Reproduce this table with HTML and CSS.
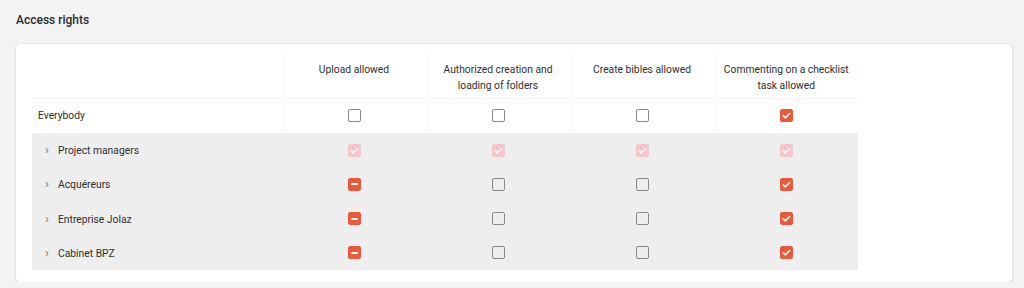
FILE: index.html
```html
<!DOCTYPE html>
<html>
<head>
<meta charset="utf-8">
<link rel="stylesheet" href="styles.css">
</head>
<body>
<h2 class="title">Access rights</h2>
<div class="card">
  <table class="rights">
    <colgroup>
      <col class="c-name"><col class="c-opt"><col class="c-opt"><col class="c-opt"><col class="c-opt">
    </colgroup>
    <thead>
      <tr>
        <th></th>
        <th>Upload allowed</th>
        <th>Authorized creation and loading of folders</th>
        <th>Create bibles allowed</th>
        <th>Commenting on a checklist task allowed</th>
      </tr>
    </thead>
    <tbody>
      <tr class="top">
        <td class="name">Everybody</td>
        <td><span class="cb"></span></td>
        <td><span class="cb"></span></td>
        <td><span class="cb"></span></td>
        <td><span class="cb on"><svg viewBox="0 0 13 13"><path d="M3.3 6.8 5.4 8.8 9.7 4.5"/></svg></span></td>
      </tr>
      <tr class="grp">
        <td class="name"><span class="chev">›</span>Project managers</td>
        <td><span class="cb dis"><svg viewBox="0 0 13 13"><path d="M3.3 6.8 5.4 8.8 9.7 4.5"/></svg></span></td>
        <td><span class="cb dis"><svg viewBox="0 0 13 13"><path d="M3.3 6.8 5.4 8.8 9.7 4.5"/></svg></span></td>
        <td><span class="cb dis"><svg viewBox="0 0 13 13"><path d="M3.3 6.8 5.4 8.8 9.7 4.5"/></svg></span></td>
        <td><span class="cb dis"><svg viewBox="0 0 13 13"><path d="M3.3 6.8 5.4 8.8 9.7 4.5"/></svg></span></td>
      </tr>
      <tr class="grp">
        <td class="name"><span class="chev">›</span>Acquéreurs</td>
        <td><span class="cb on"><i class="dash"></i></span></td>
        <td><span class="cb"></span></td>
        <td><span class="cb"></span></td>
        <td><span class="cb on"><svg viewBox="0 0 13 13"><path d="M3.3 6.8 5.4 8.8 9.7 4.5"/></svg></span></td>
      </tr>
      <tr class="grp">
        <td class="name"><span class="chev">›</span>Entreprise Jolaz</td>
        <td><span class="cb on"><i class="dash"></i></span></td>
        <td><span class="cb"></span></td>
        <td><span class="cb"></span></td>
        <td><span class="cb on"><svg viewBox="0 0 13 13"><path d="M3.3 6.8 5.4 8.8 9.7 4.5"/></svg></span></td>
      </tr>
      <tr class="grp">
        <td class="name"><span class="chev">›</span>Cabinet BPZ</td>
        <td><span class="cb on"><i class="dash"></i></span></td>
        <td><span class="cb"></span></td>
        <td><span class="cb"></span></td>
        <td><span class="cb on"><svg viewBox="0 0 13 13"><path d="M3.3 6.8 5.4 8.8 9.7 4.5"/></svg></span></td>
      </tr>
    </tbody>
  </table>
</div>
</body>
</html>
```

FILE: styles.css
```css
html, body {
  margin: 0;
  padding: 0;
  background: #f3f3f3;
  font-family: Roboto, "Liberation Sans", sans-serif;
  color: #333;
}
body {
  padding: 12px 12px 0 16px;
}
.title {
  margin: 0;
  font-size: 12px;
  font-weight: 500;
  line-height: 16px;
  color: #2b2b2b;
}
.card {
  margin-top: 16px;
  width: 996px;
  box-sizing: border-box;
  background: #fff;
  border-radius: 4px;
  box-shadow: 0 0 2px rgba(0,0,0,0.12), 0 1px 2px rgba(0,0,0,0.14);
  padding: 6px 16px 12px 16px;
}
.rights {
  border-collapse: collapse;
  table-layout: fixed;
  width: 826px;
  font-size: 10.3px;
}
.c-name { width: 250px; }
.c-opt { width: 144px; }
.rights th {
  height: 48px;
  box-sizing: border-box;
  padding: 12px 4px 0;
  font-weight: 400;
  line-height: 16px;
  color: #2e2e2e;
  text-align: center;
  vertical-align: top;
  border-left: 1px solid #f4f4f4;
  border-bottom: 1px solid #f4f4f4;
}
.rights th:first-child { border-left: none; }
.rights td {
  height: 34px;
  padding: 0;
  text-align: center;
  vertical-align: middle;
  border-left: 1px solid #f4f4f4;
}
.rights tr.grp td { height: 34.3px; }
.rights td:first-child { border-left: none; }
.rights tr.grp td { background: #eeeeee; border-left-color: #ebebeb; }
.rights tr.grp td:first-child { border-left: none; }
.rights td.name {
  text-align: left;
  padding-left: 6px;
  color: #2e2e2e;
}
.chev {
  display: inline-block;
  width: 13px;
  margin-left: 7px;
  color: #777;
  font-size: 13px;
}
.cb {
  display: inline-block;
  box-sizing: border-box;
  width: 13px;
  height: 13px;
  border: 1px solid #8a8a8a;
  border-radius: 2px;
  background: #fff;
  vertical-align: middle;
  position: relative;
}
.grp .cb { background: transparent; }
.cb.on {
  background: #ea5a3a;
  border-color: #ea5a3a;
}
.cb.dis {
  background: #f5c5cb;
  border-color: #f5c5cb;
}
.cb svg {
  position: absolute;
  left: -1px;
  top: -1px;
  width: 13px;
  height: 13px;
}
.cb svg path {
  fill: none;
  stroke: #fff;
  stroke-width: 1.6;
  stroke-linecap: round;
  stroke-linejoin: round;
}
.cb .dash {
  position: absolute;
  left: 2px;
  top: 4.5px;
  width: 7px;
  height: 2px;
  background: #fff;
  border-radius: 1px;
}
```
